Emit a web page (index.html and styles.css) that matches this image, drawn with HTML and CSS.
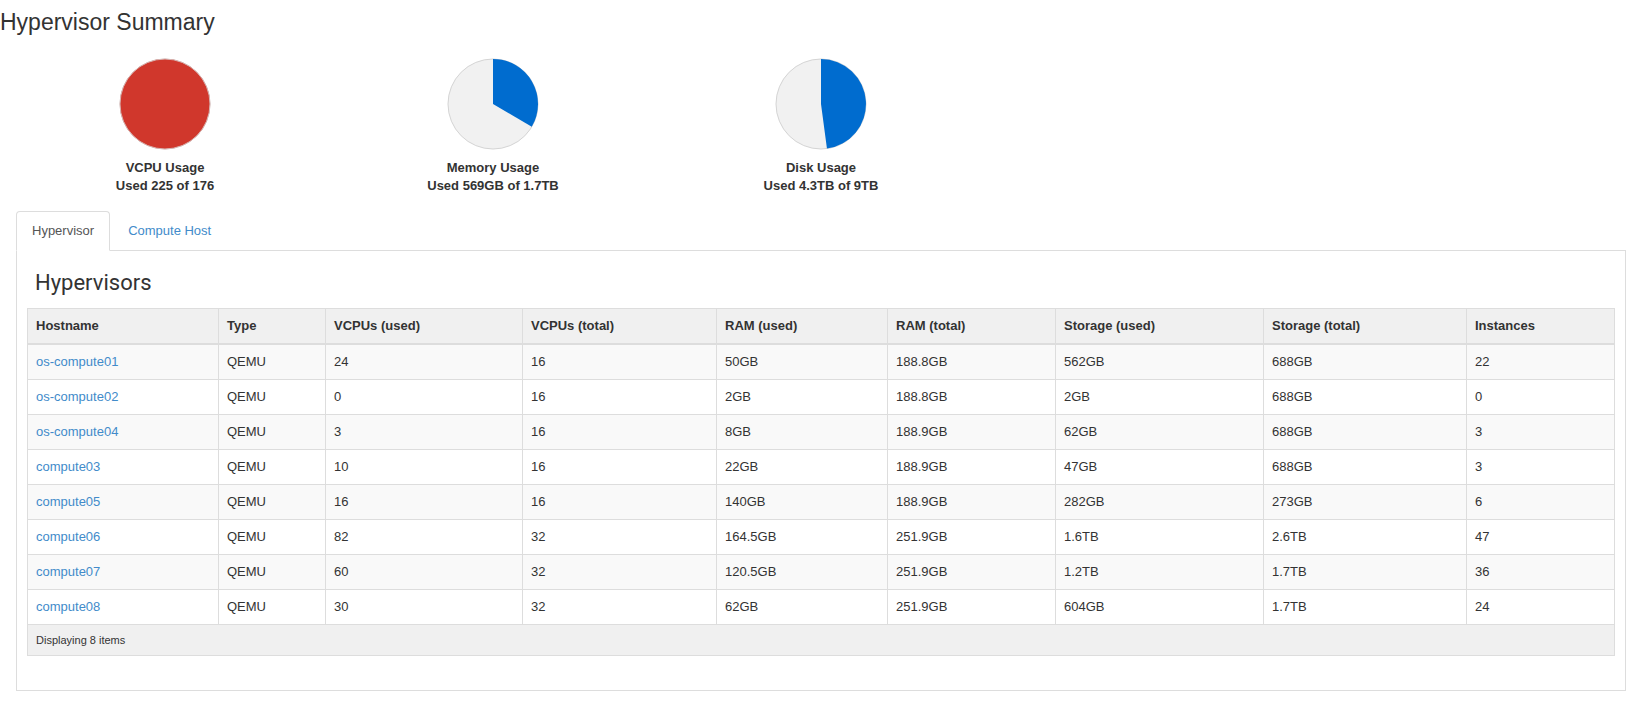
FILE: index.html
```html
<!DOCTYPE html>
<html lang="en">
<head>
<meta charset="utf-8">
<title>Hypervisor Summary</title>
<link rel="stylesheet" href="styles.css">
</head>
<body>
<h1 class="page-title">Hypervisor Summary</h1>

<div class="quota">
  <div class="quota-item">
    <svg class="pie" width="92" height="92" viewBox="0 0 92 92">
      <circle cx="46" cy="46" r="45" class="pie-bg"/>
      <circle cx="46" cy="46" r="45" class="pie-full"/>
    </svg>
    <div class="quota-label">VCPU Usage<br>Used 225 of 176</div>
  </div>
  <div class="quota-item">
    <svg class="pie" width="92" height="92" viewBox="0 0 92 92">
      <circle cx="46" cy="46" r="45" class="pie-bg"/>
      <path class="pie-used" d="M46,46 L46,1 A45,45 0 0 1 84.77,68.84 Z"/>
    </svg>
    <div class="quota-label">Memory Usage<br>Used 569GB of 1.7TB</div>
  </div>
  <div class="quota-item">
    <svg class="pie" width="92" height="92" viewBox="0 0 92 92">
      <circle cx="46" cy="46" r="45" class="pie-bg"/>
      <path class="pie-used" d="M46,46 L46,1 A45,45 0 0 1 51.95,90.6 Z"/>
    </svg>
    <div class="quota-label">Disk Usage<br>Used 4.3TB of 9TB</div>
  </div>
</div>

<ul class="nav-tabs">
  <li class="tab active"><a href="#">Hypervisor</a></li>
  <li class="tab"><a href="#">Compute Host</a></li>
</ul>

<div class="tab-panel">
  <h3 class="table-title">Hypervisors</h3>
  <table class="data-table">
    <colgroup>
      <col class="w-host"><col class="w-type"><col class="w-vused"><col class="w-vtotal"><col class="w-rused"><col class="w-rtotal"><col class="w-sused"><col class="w-stotal"><col class="w-inst">
    </colgroup>
    <thead>
      <tr><th>Hostname</th><th>Type</th><th>VCPUs (used)</th><th>VCPUs (total)</th><th>RAM (used)</th><th>RAM (total)</th><th>Storage (used)</th><th>Storage (total)</th><th>Instances</th></tr>
    </thead>
    <tbody>
      <tr><td><a href="#">os-compute01</a></td><td>QEMU</td><td>24</td><td>16</td><td>50GB</td><td>188.8GB</td><td>562GB</td><td>688GB</td><td>22</td></tr>
      <tr><td><a href="#">os-compute02</a></td><td>QEMU</td><td>0</td><td>16</td><td>2GB</td><td>188.8GB</td><td>2GB</td><td>688GB</td><td>0</td></tr>
      <tr><td><a href="#">os-compute04</a></td><td>QEMU</td><td>3</td><td>16</td><td>8GB</td><td>188.9GB</td><td>62GB</td><td>688GB</td><td>3</td></tr>
      <tr><td><a href="#">compute03</a></td><td>QEMU</td><td>10</td><td>16</td><td>22GB</td><td>188.9GB</td><td>47GB</td><td>688GB</td><td>3</td></tr>
      <tr><td><a href="#">compute05</a></td><td>QEMU</td><td>16</td><td>16</td><td>140GB</td><td>188.9GB</td><td>282GB</td><td>273GB</td><td>6</td></tr>
      <tr><td><a href="#">compute06</a></td><td>QEMU</td><td>82</td><td>32</td><td>164.5GB</td><td>251.9GB</td><td>1.6TB</td><td>2.6TB</td><td>47</td></tr>
      <tr><td><a href="#">compute07</a></td><td>QEMU</td><td>60</td><td>32</td><td>120.5GB</td><td>251.9GB</td><td>1.2TB</td><td>1.7TB</td><td>36</td></tr>
      <tr><td><a href="#">compute08</a></td><td>QEMU</td><td>30</td><td>32</td><td>62GB</td><td>251.9GB</td><td>604GB</td><td>1.7TB</td><td>24</td></tr>
    </tbody>
    <tfoot>
      <tr><td colspan="9">Displaying 8 items</td></tr>
    </tfoot>
  </table>
</div>
</body>
</html>
```

FILE: styles.css
```css
html, body {
  margin: 0;
  padding: 0;
  background: #fff;
}

body {
  font-family: "Liberation Sans", Arial, Helvetica, sans-serif;
  font-size: 13px;
  line-height: 18px;
  color: #333;
}

a {
  color: #428bca;
  text-decoration: none;
}

.page-title {
  margin: 0;
  padding-top: 4px;
  font-size: 23px;
  font-weight: normal;
  line-height: 36px;
  color: #333;
}

.quota {
  display: flex;
  padding-left: 1px;
  margin-top: 18px;
}

.quota-item {
  width: 328px;
  display: flex;
  flex-direction: column;
  align-items: center;
}

.pie {
  display: block;
}

.pie-bg {
  fill: #f1f1f1;
  stroke: #d4d4d4;
  stroke-width: 1;
}

.pie-full {
  fill: #d0372c;
  stroke: #d9b5b2;
  stroke-width: 1;
}

.pie-used {
  fill: #006ccf;
}

.quota-label {
  margin-top: 9px;
  font-weight: bold;
  line-height: 18px;
  text-align: center;
  color: #333;
}

.nav-tabs {
  display: flex;
  list-style: none;
  margin: 16px 18px 0 16px;
  padding: 0;
  border-bottom: 1px solid #ddd;
}

.tab {
  margin-bottom: -1px;
}

.tab a {
  display: block;
  padding: 10px 15px;
  margin-right: 2px;
  line-height: 18px;
  border: 1px solid transparent;
  border-radius: 4px 4px 0 0;
}

.tab.active a {
  color: #555;
  background: #fff;
  border-color: #ddd #ddd transparent;
}

.tab-panel {
  margin: 0 18px 0 16px;
  padding: 20px 10px 14px;
  border: 1px solid #ddd;
  border-top: 0;
}

.table-title {
  margin: 0 0 13px 8px;
  font-family: Roboto, "Liberation Sans", sans-serif;
  font-size: 22px;
  font-weight: normal;
  line-height: 24px;
  color: #333;
}

.data-table {
  width: 100%;
  table-layout: fixed;
  border-collapse: collapse;
  border: 1px solid #ddd;
  margin-bottom: 20px;
}

.w-host { width: 191px; }
.w-type { width: 107px; }
.w-vused { width: 197px; }
.w-vtotal { width: 194px; }
.w-rused { width: 171px; }
.w-rtotal { width: 168px; }
.w-sused { width: 208px; }
.w-stotal { width: 203px; }
.w-inst { width: 148px; }

.data-table th,
.data-table td {
  padding: 8px;
  line-height: 18px;
  border: 1px solid #ddd;
  text-align: left;
  vertical-align: top;
  white-space: nowrap;
}

.data-table thead th {
  background: #f0f0f0;
  font-weight: bold;
  border-bottom: 2px solid #ddd;
}

.data-table tbody tr:nth-child(odd) td {
  background: #f9f9f9;
}

.data-table tfoot td {
  background: #f0f0f0;
  font-size: 11px;
  line-height: 14px;
  padding: 8px;
}
```
